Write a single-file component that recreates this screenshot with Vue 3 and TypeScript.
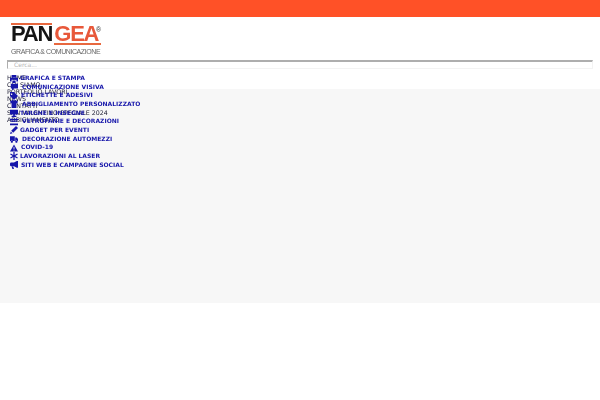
<script setup lang="ts">
const topLinks: string[] = ['HOME', 'CHI SIAMO', 'PORTFOLIO LAVORI', 'NEWS', 'CONTATTI', 'SAN VALENTINO SPECIALE 2024', 'ABBIGLIAMENTO'];
const icons: Record<string, string> = {
  print: 'M2 0h6v3H2zM0 3.5h10V8H8V6H2v2H0zM3 7h4v3H3z',
  bubble: 'M1 1h9v6H5L2.5 9.5V7H1z',
  tag: 'M0 0h5l5 5-5 5-5-5zM2 1.5a1 1 0 1 0 .01 0z',
  shirt: 'M3 0l2 1 2-1 3 2-1 2.5-1-.5v6H2V4l-1 .5L0 2z',
  sign: 'M0 1h10v6H6v1.5h2V10H2V8.5h2V7H0z',
  window: 'M0 1h10v2H0zM1 4h8v1H1zM0 7h10v2H0z',
  pen: 'M7.5 0L10 2.5 4 8.5 1.5 6zM1 6.8L3.2 9 0 10z',
  truck: 'M0 1.5h6V7.5H0zM6.5 3h2L10 5v2.5H6.5zM2.3 7a1.4 1.4 0 1 0 .01 0zM8 7a1.4 1.4 0 1 0 .01 0z',
  warn: 'M5 .5L10 9.5H0zM4.5 3.5v3h1v-3zM4.5 7.2v1h1v-1z',
  star: 'M4.2 0h1.6v3.6L9 1.8l.8 1.4L6.6 5l3.2 1.8L9 8.2 5.8 6.4V10H4.2V6.4L1 8.2.2 6.8 3.4 5 .2 3.2 1 1.8l3.2 1.8z',
  horn: 'M8.5 0H10v8.5H8.5L5 6.5H1.5A1.5 1.5 0 0 1 0 5V3.5A1.5 1.5 0 0 1 1.5 2H5zM2 7h2l1 3H3z',
};
const categories: { label: string; icon: string; width: number }[] = [
  { label: 'GRAFICA E STAMPA', icon: 'print', width: 10 },
  { label: 'COMUNICAZIONE VISIVA', icon: 'bubble', width: 12 },
  { label: 'ETICHETTE E ADESIVI', icon: 'tag', width: 11 },
  { label: 'ABBIGLIAMENTO PERSONALIZZATO', icon: 'shirt', width: 12 },
  { label: 'TARGHE E INSEGNE', icon: 'sign', width: 10 },
  { label: 'VETROFANIE E DECORAZIONI', icon: 'window', width: 12 },
  { label: 'GADGET PER EVENTI', icon: 'pen', width: 10 },
  { label: 'DECORAZIONE AUTOMEZZI', icon: 'truck', width: 12 },
  { label: 'COVID-19', icon: 'warn', width: 11 },
  { label: 'LAVORAZIONI AL LASER', icon: 'star', width: 10 },
  { label: 'SITI WEB E CAMPAGNE SOCIAL', icon: 'horn', width: 11 },
];
</script>

<template>
  <div class="page">
    <div class="topbar"></div>
    <header class="head">
      <div class="logo">
        <div class="logo-mark">
          <span class="pan">PAN</span><span class="gea">GEA</span><span class="reg">®</span>
        </div>
        <div class="logo-sub">GRAFICA &amp; COMUNICAZIONE</div>
      </div>
      <input class="search" placeholder="Cerca..." />
    </header>
    <section class="band">
      <ul class="top-links">
        <li v-for="l in topLinks" :key="l">{{ l }}</li>
      </ul>
      <ul class="cats">
        <li v-for="c in categories" :key="c.label" class="cat" :style="{ gridTemplateColumns: c.width + 'px auto' }">
          <svg class="ico" viewBox="0 0 10 10"><path :d="icons[c.icon]" fill-rule="evenodd" /></svg>
          <span>{{ c.label }}</span>
        </li>
      </ul>
    </section>
  </div>
</template>

<style>
body { margin: 0; background: #fff; }
</style>

<style scoped>
.page { width: 600px; height: 400px; overflow: hidden; font-family: "DejaVu Sans", sans-serif; }
.topbar { height: 17px; background: #ff5127; }
.head { height: 72px; padding: 6px 0 0 7px; box-sizing: border-box; background: #fff; }
.logo { height: 37px; margin-left: 4px; width: 92px; filter: blur(0.3px); }
.logo-mark { position: relative; display: flex; align-items: flex-start; width: 90px; height: 23px; font-family: "Liberation Sans", sans-serif; font-weight: 700; font-size: 22px; letter-spacing: -1.2px; white-space: nowrap; }
.pan { color: #151515; border-top: 2px solid #e8683f; line-height: 18px; }
.gea { color: #e8583a; border-bottom: 2px solid #e8683f; margin: 2px 0 0 2px; padding-right: 3px; line-height: 18px; }
.reg { position: absolute; left: 85px; top: 3px; font-size: 7px; font-weight: 400; line-height: 8px; letter-spacing: 0; color: #333; }
.logo-sub { margin-top: 2px; font-family: "Liberation Sans", sans-serif; font-size: 7px; letter-spacing: -0.42px; color: #666; line-height: 8px; white-space: nowrap; }
.search { display: block; width: 586px; height: 9px; padding: 0 6px 2px; box-sizing: border-box; border: 1px solid #f3f3f3; border-top: 2px solid #aeaeae; border-left: 1px solid #aeaeae; outline: 0; font-family: "DejaVu Sans", sans-serif; font-size: 6px; line-height: 6px; margin: 0; background: #fff; }
.search::placeholder { color: #b5b5b5; }
.band { position: relative; height: 214px; background: #f7f7f7; }
.top-links, .cats { list-style: none; margin: 0; padding: 0; position: absolute; white-space: nowrap; filter: blur(0.25px); }
.top-links { left: 7px; top: -15.5px; font-size: 6.3px; line-height: 7px; color: #222238; }
.cats { left: 10px; top: -14.8px; font-size: 6px; font-weight: 700; line-height: 8.65px; color: #1616aa; }
.cat { display: grid; align-items: center; height: 8.65px; }
.ico { width: 8px; height: 8px; fill: #1616aa; display: block; }
</style>
